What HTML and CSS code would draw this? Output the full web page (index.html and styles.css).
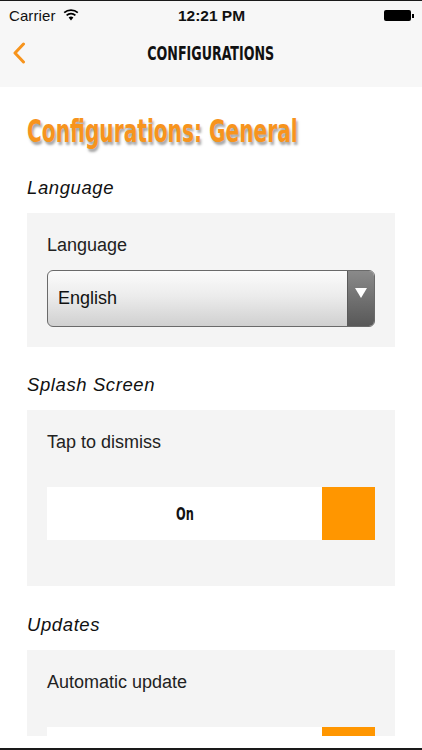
FILE: index.html
```html
<!DOCTYPE html>
<html>
<head>
<meta charset="utf-8">
<link rel="stylesheet" href="styles.css">
</head>
<body>
<div class="screen">
  <header class="header">
    <div class="status">
      <div class="status-left">
        <span class="carrier">Carrier</span>
        <svg class="wifi" width="16" height="12" viewBox="0 0 16 12">
          <path d="M8 11.5 L5.6 8.6 A3.6 3.6 0 0 1 10.4 8.6 Z" fill="#000"/>
          <path d="M3.6 6.4 A6.4 6.4 0 0 1 12.4 6.4" stroke="#000" stroke-width="1.7" fill="none"/>
          <path d="M1.2 3.7 A10 10 0 0 1 14.8 3.7" stroke="#000" stroke-width="1.7" fill="none"/>
        </svg>
      </div>
      <span class="time">12:21 PM</span>
      <div class="status-right">
        <span class="battery"></span><span class="nub"></span>
      </div>
    </div>
    <div class="nav">
      <svg class="back" width="14" height="22" viewBox="0 0 14 22">
        <path d="M11.5 2 L3 11 L11.5 20" stroke="#f7941d" stroke-width="3" fill="none" stroke-linecap="round" stroke-linejoin="round"/>
      </svg>
      <span class="nav-title">CONFIGURATIONS</span>
    </div>
  </header>
  <main class="content">
    <h1 class="page-title"><span class="narrow">Configurations: General</span></h1>

    <h2 class="section">Language</h2>
    <div class="card card-lang">
      <div class="label">Language</div>
      <div class="select">
        <span class="select-value">English</span>
        <span class="select-arrow"><svg width="12" height="10" viewBox="0 0 12 10"><path d="M0 0 H12 L6 10 Z" fill="#fff"/></svg></span>
      </div>
    </div>

    <h2 class="section">Splash Screen</h2>
    <div class="card card-toggle">
      <div class="label">Tap to dismiss</div>
      <div class="toggle">
        <span class="toggle-text"><span class="narrow">On</span></span>
        <span class="toggle-knob"></span>
      </div>
    </div>

    <h2 class="section">Updates</h2>
    <div class="card card-last">
      <div class="label">Automatic update</div>
      <div class="toggle">
        <span class="toggle-text"></span>
        <span class="toggle-knob"></span>
      </div>
    </div>
  </main>
</div>
</body>
</html>
```
FILE: styles.css
```css
html, body {
  margin: 0;
  padding: 0;
  background: #fff;
}
body {
  font-family: "Liberation Sans", Arial, sans-serif;
  color: #111;
}
.screen {
  width: 422px;
  height: 750px;
  box-sizing: border-box;
  border-top: 1px solid #1a1a1a;
  border-bottom: 2px solid #1a1a1a;
  overflow: hidden;
  display: flex;
  flex-direction: column;
  background: #fff;
}
.header {
  background: #f7f7f7;
  height: 86px;
  flex: none;
}
.status {
  height: 29px;
  display: flex;
  align-items: center;
  justify-content: space-between;
  padding: 0 8px 0 9px;
}
.status-left {
  display: flex;
  align-items: center;
  gap: 7px;
  width: 120px;
}
.carrier {
  font-size: 15px;
  letter-spacing: 0.1px;
}
.wifi { margin-top: -2px; }
.time {
  font-size: 15.5px;
  font-weight: 600;
}
.status-right {
  width: 120px;
  display: flex;
  justify-content: flex-end;
  align-items: center;
}
.battery {
  width: 27px;
  height: 11px;
  background: #000;
  border-radius: 2px;
}
.nub {
  width: 2px;
  height: 4px;
  background: #000;
  margin-left: 1px;
}
.nav {
  height: 57px;
  display: flex;
  align-items: center;
  justify-content: center;
  position: relative;
}
.back {
  position: absolute;
  left: 12px;
  top: 12px;
}
.nav-title {
  display: inline-block;
  font-family: "DejaVu Sans Condensed", "DejaVu Sans", sans-serif;
  font-weight: 700;
  font-size: 19px;
  color: #111;
  margin-top: -11px;
  transform: scaleX(0.74);
  transform-origin: center;
}
.content {
  padding: 0 27px;
  flex: 1;
  min-height: 0;
}
.page-title {
  margin: 26px 0 0 0;
  font-family: "DejaVu Sans Condensed", "DejaVu Sans", sans-serif;
  font-weight: 700;
  font-size: 32px;
  line-height: 36px;
  color: #f7941d;
  text-shadow: 2px 3px 3px rgba(0, 0, 0, 0.35);
  white-space: nowrap;
}
.narrow {
  display: inline-block;
  transform: scaleX(0.70);
  transform-origin: left center;
}
.section {
  margin: 28px 0 0 0;
  font-size: 18.5px;
  font-weight: 400;
  font-style: italic;
  line-height: 22px;
  letter-spacing: 0.6px;
  color: #111;
}
.card {
  margin-top: 14px;
  background: #f4f4f4;
  padding: 22px 20px 0 20px;
}
.card + .section { margin-top: 27px; }
.card-toggle + .section { margin-top: 28px; }
.label {
  font-size: 18px;
  line-height: 21px;
  color: #222;
}
.card-lang { height: 112px; }
.select {
  margin-top: 14px;
  height: 57px;
  box-sizing: border-box;
  border: 1px solid #6a6a6a;
  border-radius: 6px;
  background: linear-gradient(#fbfbfb 0%, #ececec 45%, #d0d0d0 100%);
  display: flex;
  align-items: stretch;
  overflow: hidden;
}
.select-value {
  flex: 1;
  display: flex;
  align-items: center;
  padding-left: 10px;
  font-size: 18px;
  color: #111;
}
.select-arrow {
  width: 27px;
  background: linear-gradient(#8a8a8a, #585858);
  border-left: 1px solid #5a5a5a;
  display: flex;
  justify-content: center;
  padding-top: 17px;
  box-sizing: border-box;
}
.card-toggle { height: 154px; }
.toggle {
  margin-top: 34px;
  height: 53px;
  background: #fff;
  display: flex;
}
.toggle-text {
  flex: 1;
  display: flex;
  align-items: center;
  justify-content: center;
  font-family: "DejaVu Sans Condensed", "DejaVu Sans", sans-serif;
  font-weight: 700;
  font-size: 17px;
  color: #111;
}
.toggle-text .narrow {
  transform: scaleX(0.745);
  transform-origin: center;
}
.toggle-knob {
  width: 53px;
  background: #ff9600;
}
.card-last {
  height: 64px;
  overflow: hidden;
}
```
